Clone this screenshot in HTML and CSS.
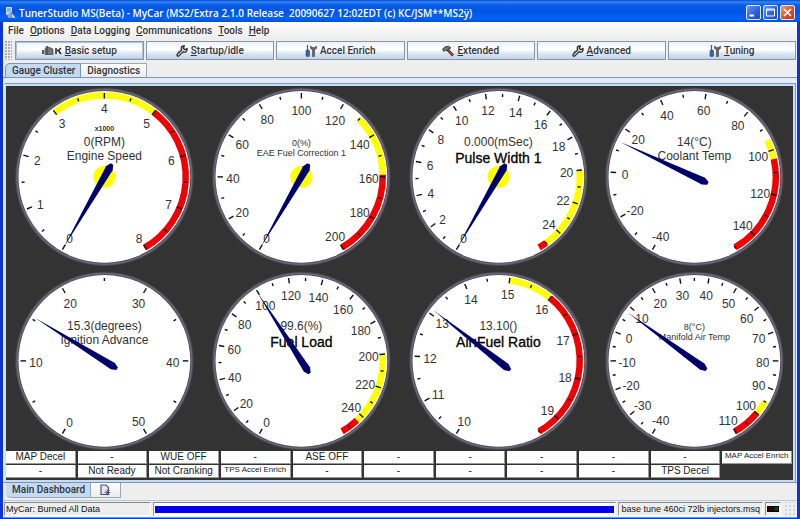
FILE: index.html
```html
<!DOCTYPE html>
<html lang="en">
<head>
<meta charset="utf-8">
<title>TunerStudio MS(Beta) - MyCar</title>
<link rel="stylesheet" href="styles.css">
</head>
<body>
<svg class="defs" aria-hidden="true">
  <symbol id="wrench" viewBox="0 0 13 13">
    <path d="M1 10.500 6 5.500C5 3 6.500 1 9 1L8 3.500 9.500 5 12 4C12.500 7 10 8.500 7.500 7.500L3 12Q1 12.500 1 10.500Z" fill="#d9d9d9" stroke="#222" stroke-width="1.300"/>
    <path d="M4 6 1.500 8.500M5 2 7 1" stroke="#555" stroke-width="1"/>
  </symbol>
  <symbol id="tools" viewBox="0 0 12 12">
    <path d="M2.500 0V5" stroke="#555" stroke-width="1.200"/>
    <rect x="1" y="5" width="3.500" height="6.500" rx="1" fill="#3d6496" stroke="#294a78" stroke-width=".6"/>
    <path d="M5.500 1V3.500L7.500 5V11.500H9.500V5L11.500 3.500V1L9.500 2.500H7.500Z" fill="#666" stroke="#333" stroke-width=".5"/>
  </symbol>
  <symbol id="hammer" viewBox="0 0 12 12">
    <path d="M5 4 11 10.500" stroke="#5a2b22" stroke-width="2.600"/>
    <path d="M5.500 4.500 10.500 10" stroke="#c66a55" stroke-width="1"/>
    <path d="M.500 4 4 1.500Q7 .5 9 3L6.500 4 5.500 6 3.500 5 2 6.500Z" fill="#777" stroke="#222" stroke-width=".8"/>
  </symbol>
</svg>

<header class="titlebar">
  <svg class="app-icon" viewBox="0 0 12 12" aria-hidden="true">
    <rect x="1" y="0" width="6" height="8" rx="1" fill="#c9dff5"/>
    <path d="M2 2H6M2 4H6" stroke="#5b83b8" stroke-width="1"/>
    <circle cx="5" cy="8.500" r="2.500" fill="#8fa8c8"/>
    <path d="M6 5 11 11H7Z" fill="#dfe5ee" stroke="#44679c" stroke-width=".6"/>
  </svg>
  <h1 class="title">TunerStudio MS(Beta) - MyCar (MS2/Extra 2.1.0 Release  20090627 12:02EDT (c) KC/JSM**MS2ÿ)</h1>
  <div class="window-buttons">
    <button class="win-btn" aria-label="Minimize"><svg viewBox="0 0 13 13"><path d="M2.500 9.500H7" stroke="#fff" stroke-width="2"/></svg></button>
    <button class="win-btn" aria-label="Maximize"><svg viewBox="0 0 13 13"><path d="M2.500 3H10.500V10H2.500ZM2.500 4H10.500" fill="none" stroke="#fff" stroke-width="1"/></svg></button>
    <button class="win-btn close" aria-label="Close"><svg viewBox="0 0 13 13"><path d="M3 3 10 10M10 3 3 10" stroke="#fff" stroke-width="1.700"/></svg></button>
  </div>
</header>

<div class="frame">
  <nav class="menubar">
    <button>File</button>
    <button><u>O</u>ptions</button>
    <button><u>D</u>ata Logging</button>
    <button><u>C</u>ommunications</button>
    <button><u>T</u>ools</button>
    <button><u>H</u>elp</button>
  </nav>

  <div class="toolbar">
    <span class="grip"></span>
    <div class="tool-buttons">
      <button class="focused">
        <svg class="wide" viewBox="0 0 20 11" aria-hidden="true">
          <path d="M1 5V9M14 3V9M15 5.500H16M19 3 16.500 5.500 19 9" fill="none" stroke="#222" stroke-width="1.500"/>
          <path d="M3 4 5 1V9.500H3ZM5 1.500 11 4V9.500H5Z" fill="#777" stroke="#444" stroke-width=".7"/>
        </svg>
        <span><u>B</u>asic setup</span></button>
      <button><svg aria-hidden="true"><use href="#wrench"/></svg><span><u>S</u>tartup/idle</span></button>
      <button><svg aria-hidden="true"><use href="#tools"/></svg><span>Accel Enrich</span></button>
      <button><svg aria-hidden="true"><use href="#hammer"/></svg><span><u>E</u>xtended</span></button>
      <button><svg aria-hidden="true"><use href="#wrench"/></svg><span><u>A</u>dvanced</span></button>
      <button><svg aria-hidden="true"><use href="#tools"/></svg><span><u>T</u>uning</span></button>
    </div>
  </div>

  <div class="tabs">
    <button class="tab active">Gauge Cluster</button>
    <button class="tab">Diagnostics</button>
  </div>

  <main class="cluster">
    <div class="dashboard">
      <div class="gauges" id="gauges"></div>
      <div class="indicators" id="indicators"></div>
    </div>
  </main>

  <div class="tabs bottom">
    <button class="tab active">Main Dashboard</button>
    <button class="tab icon-tab" aria-label="New dashboard">
      <svg viewBox="0 0 11 12" aria-hidden="true">
        <path d="M1 1H6L8.500 3.500V10.500H1Z" fill="#e4e4f4" stroke="#55556a" stroke-width="1.200"/>
        <path d="M7.500 5.500V11.500M4.500 8.500H10.500M5.500 6.500 9.500 10.500M9.500 6.500 5.500 10.500" stroke="#55556a" stroke-width=".8"/>
      </svg>
    </button>
  </div>

  <footer class="status">
    <span class="cell message">MyCar: Burned All Data</span>
    <div class="bar"><div class="fill"></div></div>
    <span class="cell file">base tune 460ci 72lb injectors.msq</span>
    <span class="cell led-cell"><span class="leds"><i></i><i class="on"></i></span></span>
    <span class="resize"></span>
  </footer>
</div>
<script src="gauges.js"></script>
</body>
</html>
```
FILE: styles.css
```css
* { box-sizing: border-box; }

body {
  margin: 0;
  background: #0a36d6;
  color: #333;
  font-family: "Liberation Sans", Arial, sans-serif;
  font-size: 10px;
}

button {
  margin: 0;
  padding: 0;
  border: 0;
  background: none;
  color: inherit;
  font: 500 10px/12px Roboto, sans-serif;
}

.defs { position: absolute; width: 0; height: 0; }

/* Title bar */
.titlebar {
  display: flex;
  align-items: center;
  gap: 2px;
  height: 22px;
  padding: 3px 5px 0;
  background: linear-gradient(#0a48c8 0, #2f86f8 2px, #0a5ce6 5px, #0054e3 12px, #0462f8 18px, #0050d8 22px);
}
.app-icon { width: 12px; height: 12px; }
.title {
  flex: 1;
  margin: 0;
  color: #fff;
  font: 600 10px/14px "Open Sans", sans-serif;
  white-space: pre;
  overflow: hidden;
}
.window-buttons { display: flex; gap: 2px; }
.win-btn {
  width: 15px;
  height: 15px;
  border: 1px solid #dce8fb;
  border-radius: 2px;
  background: linear-gradient(135deg, #6d97f0, #2a5cdc 60%, #1d4ccc);
}
.win-btn svg { display: block; width: 13px; height: 13px; }
.close { background: linear-gradient(135deg, #f09a80, #dc4a20 60%, #c53a10); }

.frame {
  margin: 0 3px;
  padding-bottom: 1px;
  border-bottom: 1px solid #6c9cf0;
  background: #eee;
}

/* Menu */
.menubar {
  display: flex;
  gap: 6px;
  height: 17px;
  padding: 1px 5px 0;
  background: linear-gradient(#fff, #ececec);
}

/* Toolbar */
.toolbar {
  display: flex;
  gap: 3px;
  padding: 2px 1px 2px 2px;
}
.grip {
  width: 7px;
  background: radial-gradient(circle at 1px 1px, #b0b0b0 1px, transparent 1px) 0 0 / 3px 3px;
}
.tool-buttons {
  flex: 1;
  display: grid;
  grid-template-columns: repeat(6, 1fr);
  gap: 2px;
}
.tool-buttons button {
  display: flex;
  align-items: center;
  justify-content: center;
  gap: 3px;
  height: 19px;
  border: 1px solid #8696a6;
  background: linear-gradient(#eef3f9, #fff 45%, #d8e4f0 70%, #c0d4e8);
}
.tool-buttons .focused { box-shadow: inset 0 0 0 1px #a9c4e0; }
.tool-buttons svg { width: 12px; height: 12px; }
.tool-buttons svg.wide { width: 20px; height: 11px; }

/* Tabs */
.tabs {
  display: flex;
  padding: 1px 2px 0;
  border-bottom: 1px solid #7a93b8;
}
.tab {
  height: 14px;
  padding: 0 6px;
  border: 1px solid #9aa8b8;
  border-bottom: 0;
  border-left: 0;
  background: linear-gradient(#fff, #ececec);
}
.tab.active {
  padding: 0 5px 0 6px;
  border-color: #7a93b8;
  border-left: 1px solid #7a93b8;
  border-top-left-radius: 5px;
  background: #c2daf3;
}
.tabs.bottom {
  padding: 0 3px 2px;
  border-top: 1px solid #7a93b8;
  border-bottom-color: #b8c8dc;
}
.bottom .tab {
  height: 15px;
  border: 1px solid #9aa8b8;
  border-top: 0;
  border-left: 0;
}
.bottom .tab.active {
  padding: 0 5px 0 6px;
  border-radius: 0 0 0 5px;
}
.bottom .icon-tab { padding: 0 9px; }
.icon-tab svg { display: block; width: 11px; height: 12px; }

/* Dashboard */
.cluster {
  padding: 5px 1px 0 2px;
  background: #e3ebf4;
}
.dashboard {
  padding: 2px 2px 2px 1px;
  border: 1px solid #7a9acb;
  border-width: 1px 1px 0 0;
  background: #c8dcf4;
}
.gauges {
  display: grid;
  grid-template-columns: repeat(4, 1fr);
  row-gap: 4px;
  padding-top: 1px;
  background: #333;
}
.gauges svg { display: block; width: 100%; height: auto; }
.gauge-label { font-size: 12px; fill: #333; text-anchor: middle; }
.gauge-small { font-size: 9px; }
.gauge-large { font-size: 14px; fill: #000; stroke: #000; stroke-width: .3px; }
.gauge-scale { font-size: 7px; font-weight: 700; }

.indicators {
  display: grid;
  grid-template-columns: repeat(11, 1fr);
  gap: 1px 2px;
  padding: 0 1px 2px 0;
  background: #333;
}
.indicator {
  height: 13px;
  border: 1px solid #999;
  border-width: 0 1px 1px 0;
  background: #fff;
  color: #222;
  font-size: 10px;
  line-height: 12px;
  text-align: center;
  white-space: nowrap;
  overflow: hidden;
}
.indicator.small { font-size: 8px; line-height: 10px; }

/* Status bar */
.status {
  display: flex;
  gap: 2px;
  height: 15px;
  padding: 1px 0 0 1px;
  font-size: 9px;
  line-height: 13px;
  color: #111;
}
.cell {
  padding: 0 1px;
  border: 1px solid #999;
  border-color: #888 #fff #fff #999;
  white-space: nowrap;
}
.message { width: 147px; }
.file { padding: 0 2px; }
.bar {
  flex: 1;
  padding: 2px 1px;
  border: 1px solid #999;
  border-color: #888 #fff #fff #999;
  background: #fff;
}
.fill { height: 7px; margin-top: 1px; background: #00e; }
.led-cell { width: 16px; padding: 3px 1px; }
.leds { display: flex; gap: 1px; padding: 1px; background: #000; }
.leds i { flex: 1; height: 4px; background: #300; }
.leds i.on { background: #063d06; }
.resize {
  width: 14px;
  background: radial-gradient(circle at 1px 1px, #d4d4d4 1px, transparent 1px) 2px 3px / 4px 4px;
}
body::after { content: ""; display: block; height: 3px; }
```
FILE: gauges.js
```js
// Every dial sweeps 300 degrees, starting 150 degrees left of vertical.
const gauges = [
  { title: "Engine Speed", value: "0(RPM)", at: 0, min: 0, max: 8, major: 1, minor: 0.5, yellow: [3, 5], red: [5, 8], scale: "x1000" },
  { title: "EAE Fuel Correction 1", value: "0(%)", at: 0, min: 0, max: 200, major: 20, minor: 10, yellow: [130, 159], red: [159, 200], size: "small" },
  { title: "Pulse Width 1", value: "0.000(mSec)", at: 0, min: 0, max: 25.5, major: 2, minor: 1, yellow: [20, 25], red: [25, 25.5], size: "large" },
  { title: "Coolant Temp", value: "14(°C)", at: 14, min: -40, max: 150, major: 20, minor: 10, yellow: [95, 104], red: [104, 150] },
  { title: "Ignition Advance", value: "15.3(degrees)", at: 15.3, min: 0, max: 50, major: 10, minor: 5 },
  { title: "Fuel Load", value: "99.6(%)", at: 99.6, min: 0, max: 255, major: 20, minor: 10, yellow: [200, 244], red: [244, 255], size: "large" },
  { title: "Air:Fuel Ratio", value: "13.10()", at: 13.1, min: 10, max: 19.5, major: 1, minor: 0.5, yellow: [15, 16], red: [16, 19.5], size: "large" },
  { title: "Manifold Air Temp", value: "8(°C)", at: 8, min: -40, max: 110, major: 10, minor: 5, yellow: [95, 100], red: [100, 110], size: "small" }
];

const indicators = [
  ["MAP Decel", "-", "WUE OFF", "-", "ASE OFF", "-", "-", "-", "-", "-", "MAP Accel Enrich"],
  ["-", "Not Ready", "Not Cranking", "TPS Accel Enrich", "-", "-", "-", "-", "-", "TPS Decel"]
];

const angle = (g, v) => -150 + (v - g.min) / (g.max - g.min) * 300;
const point = (deg, r) => {
  const a = deg * Math.PI / 180;
  return [r * Math.sin(a), -r * Math.cos(a)];
};

function arc(g, range, color) {
  if (!range) return "";
  const a = angle(g, range[0]);
  const b = angle(g, range[1]);
  return `<path d="M${point(a, 81.5)}A81.5 81.5 0 0 1 ${point(b, 81.5)}" fill="none" stroke="${color}" stroke-width="6.5"/>`;
}

function draw(g) {
  let ticks = "";
  let labels = "";
  for (let v = g.min; v <= g.max; v += g.minor) {
    const deg = angle(g, v);
    const isMajor = (v - g.min) % g.major === 0;
    const [from, to] = isMajor ? [84, 78.5] : [83, 80];
    ticks += `<path d="M${point(deg, from)}L${point(deg, to)}" stroke="#111" stroke-width="1.4"/>`;
    if (isMajor) {
      const [x, y] = point(deg, 70.5 - String(v).length);
      labels += `<text class="gauge-label" x="${x}" y="${y + 6}">${v}</text>`;
    }
  }
  const titleY = g.size === "small" ? -21 : g.size === "large" ? -14 : -17;
  const small = g.size === "small" ? " gauge-small" : "";
  return `<svg viewBox="-98.5 -90 197 180" role="img" aria-label="${g.title}">
    <circle r="89.3" fill="#4a4852"/>
    <circle r="87.5" fill="none" stroke="#6b6978" stroke-width="1.5"/>
    <circle r="86" fill="#fff"/>
    ${arc(g, g.yellow, "#ff0")}${arc(g, g.red, "#f00000")}${ticks}${labels}
    ${g.at === g.min ? '<circle r="11" fill="#ff0"/>' : ""}
    ${g.scale ? `<text class="gauge-label gauge-scale" y="-46">${g.scale}</text>` : ""}
    <text class="gauge-label${small}" y="-31">${g.value}</text>
    <text class="gauge-label gauge-${g.size || "normal"}" y="${titleY}">${g.title}</text>
    <path d="M0-82 3.8 10 1.5 15H-1.500L-3.8 10Z" fill="#00006a" transform="rotate(${angle(g, g.at)})"/>
  </svg>`;
}

document.getElementById("gauges").innerHTML = gauges.map(draw).join("");
document.getElementById("indicators").innerHTML = indicators.flat()
  .map(t => `<div class="indicator${t.endsWith("Enrich") ? " small" : ""}">${t}</div>`).join("");
```
